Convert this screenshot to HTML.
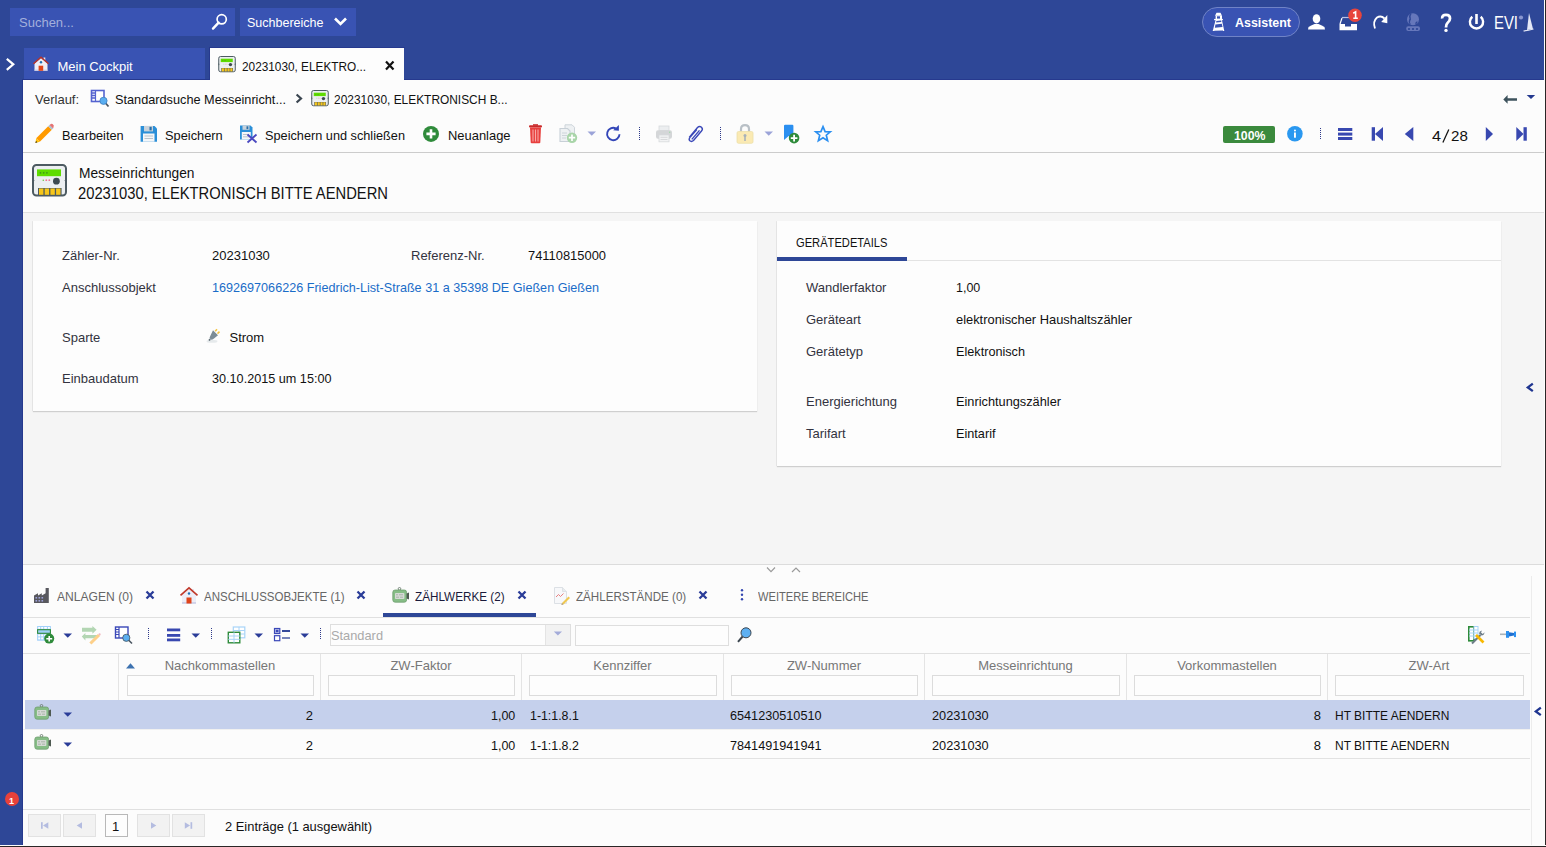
<!DOCTYPE html>
<html><head><meta charset="utf-8">
<style>
*{box-sizing:border-box;margin:0;padding:0}
html,body{width:1546px;height:847px;overflow:hidden;background:#2e4797;font-family:"Liberation Sans",sans-serif;font-size:13px;color:#1a1a1a}
.a{position:absolute}
.t{position:absolute;white-space:nowrap;line-height:0;height:0}
svg{position:absolute;overflow:visible}
</style></head><body>
<div class="a" style="left:1544px;top:0px;width:2px;height:847px;background:#fdfdfd;"></div>
<div class="a" style="left:1545px;top:0px;width:1px;height:847px;background:#2a2626;"></div>
<div class="a" style="left:0px;top:845px;width:1546px;height:2px;background:#fdfdfd;"></div>
<div class="a" style="left:0px;top:846px;width:1546px;height:1px;background:#2a2626;"></div>
<div class="a" style="left:10px;top:8px;width:225px;height:28px;background:#3953b3;"></div>
<div class="t" style="left:19px;top:23.49px;font-size:13px;color:#a3b0dc;">Suchen...</div>
<div class="a" style="left:240px;top:8px;width:116px;height:28px;background:#3953b3;"></div>
<div class="t" style="left:247px;top:23.49px;font-size:13px;color:#ffffff;transform:scaleX(0.9623);transform-origin:left 0;">Suchbereiche</div>
<div class="a" style="left:1202px;top:7px;width:98px;height:30px;background:#3953b3;border-radius:15px;border:1px solid #7083c6"></div>
<div class="t" style="left:1235px;top:23.49px;font-size:13px;color:#ffffff;font-weight:bold;transform:scaleX(0.9570);transform-origin:left 0;">Assistent</div>
<div class="a" style="left:24px;top:48px;width:181px;height:31px;background:#3953b3;"></div>
<div class="a" style="left:22px;top:79px;width:188px;height:1px;background:#26398e;"></div>
<div class="a" style="left:404px;top:79px;width:1140px;height:1px;background:#26398e;"></div>
<div class="a" style="left:22px;top:79px;width:1px;height:766px;background:#26398e;"></div>
<div class="a" style="left:209px;top:47px;width:196px;height:1px;background:#26398e;"></div>
<div class="a" style="left:209px;top:47px;width:1px;height:33px;background:#26398e;"></div>
<div class="t" style="left:57.5px;top:67.49px;font-size:13px;color:#ffffff;">Mein Cockpit</div>
<div class="a" style="left:210px;top:48px;width:194px;height:32px;background:#fdfdfd;"></div>
<div class="t" style="left:242px;top:67.49px;font-size:13px;color:#111111;transform:scaleX(0.9079);transform-origin:left 0;">20231030, ELEKTRO...</div>
<div class="a" style="left:23px;top:80px;width:1521px;height:765px;background:#fcfcfc;"></div>
<div class="t" style="left:35px;top:100.49px;font-size:13px;color:#333333;">Verlauf:</div>
<div class="t" style="left:114.5px;top:100.49px;font-size:13px;color:#111111;transform:scaleX(0.9779);transform-origin:left 0;">Standardsuche Messeinricht...</div>
<div class="t" style="left:334px;top:100.49px;font-size:13px;color:#111111;transform:scaleX(0.9165);transform-origin:left 0;">20231030, ELEKTRONISCH B...</div>
<div class="t" style="left:61.5px;top:136.49px;font-size:13px;color:#111111;transform:scaleX(0.9797);transform-origin:left 0;">Bearbeiten</div>
<div class="t" style="left:165px;top:136.49px;font-size:13px;color:#111111;transform:scaleX(0.9857);transform-origin:left 0;">Speichern</div>
<div class="t" style="left:265px;top:136.49px;font-size:13px;color:#111111;transform:scaleX(0.9784);transform-origin:left 0;">Speichern und schließen</div>
<div class="t" style="left:447.5px;top:136.49px;font-size:13px;color:#111111;transform:scaleX(0.9939);transform-origin:left 0;">Neuanlage</div>
<div class="a" style="left:1223px;top:126px;width:52px;height:17px;background:#3b8a3d;border-radius:2px"></div>
<div class="t" style="left:1233.5px;top:136.49px;font-size:13px;color:#ffffff;font-weight:bold;transform:scaleX(0.9474);transform-origin:left 0;">100%</div>
<div class="t" style="left:1431.8px;top:135.80px;font-size:15px;color:#111111;transform:scaleX(1.0789);transform-origin:left 0;">4</div>
<svg style="left:1440px;top:128px;" width="12" height="16" viewBox="0 0 12 16"><line x1="2.9" y1="14.6" x2="8.8" y2="1.6" stroke="#111" stroke-width="1.25"/></svg>
<div class="t" style="left:1451px;top:135.80px;font-size:15px;color:#111111;transform:scaleX(1.0069);transform-origin:left 0;">28</div>
<div class="a" style="left:23px;top:152px;width:1521px;height:1px;background:#cccccc;"></div>
<div class="t" style="left:78.5px;top:173.15px;font-size:14px;color:#111111;transform:scaleX(0.9829);transform-origin:left 0;">Messeinrichtungen</div>
<div class="t" style="left:78px;top:194.45px;font-size:16px;color:#111111;transform:scaleX(0.9223);transform-origin:left 0;">20231030, ELEKTRONISCH BITTE AENDERN</div>
<div class="a" style="left:23px;top:212px;width:1521px;height:1px;background:#e0e0e0;"></div>
<div class="a" style="left:23px;top:213px;width:1521px;height:351px;background:#f5f5f5;"></div>
<div class="a" style="left:33px;top:221px;width:724px;height:190px;background:#fdfdfd;box-shadow:0 1px 1px #cfcfcf,-1px 0 0 #e8e8e8"></div>
<div class="a" style="left:777px;top:221px;width:724px;height:245px;background:#fdfdfd;box-shadow:0 1px 1px #cfcfcf,-1px 0 0 #e8e8e8"></div>
<div class="t" style="left:62px;top:256.49px;font-size:13px;color:#333340;">Zähler-Nr.</div>
<div class="t" style="left:212px;top:256.49px;font-size:13px;color:#111111;">20231030</div>
<div class="t" style="left:411px;top:256.49px;font-size:13px;color:#333340;">Referenz-Nr.</div>
<div class="t" style="left:528px;top:256.49px;font-size:13px;color:#111111;transform:scaleX(0.9928);transform-origin:left 0;">74110815000</div>
<div class="t" style="left:62px;top:288.49px;font-size:13px;color:#333340;">Anschlussobjekt</div>
<div class="t" style="left:212px;top:288.49px;font-size:13px;color:#1a6cc8;transform:scaleX(0.9702);transform-origin:left 0;">1692697066226 Friedrich-List-Straße 31 a 35398 DE Gießen Gießen</div>
<div class="t" style="left:62px;top:337.99px;font-size:13px;color:#333340;">Sparte</div>
<div class="t" style="left:229.5px;top:337.99px;font-size:13px;color:#111111;">Strom</div>
<div class="t" style="left:62px;top:378.99px;font-size:13px;color:#333340;">Einbaudatum</div>
<div class="t" style="left:212px;top:378.99px;font-size:13px;color:#111111;transform:scaleX(0.9725);transform-origin:left 0;">30.10.2015 um 15:00</div>
<div class="t" style="left:796.2px;top:243.49px;font-size:13px;color:#111111;transform:scaleX(0.8578);transform-origin:left 0;">GERÄTEDETAILS</div>
<div class="a" style="left:777px;top:257px;width:130px;height:4px;background:#2e4797;"></div>
<div class="a" style="left:907px;top:260px;width:594px;height:1px;background:#e3e3e3;"></div>
<div class="t" style="left:806px;top:288.49px;font-size:13px;color:#333340;">Wandlerfaktor</div>
<div class="t" style="left:956px;top:288.49px;font-size:13px;color:#111111;transform:scaleX(0.9604);transform-origin:left 0;">1,00</div>
<div class="t" style="left:806px;top:320.49px;font-size:13px;color:#333340;">Geräteart</div>
<div class="t" style="left:956px;top:320.49px;font-size:13px;color:#111111;transform:scaleX(0.9902);transform-origin:left 0;">elektronischer Haushaltszähler</div>
<div class="t" style="left:806px;top:352.49px;font-size:13px;color:#333340;">Gerätetyp</div>
<div class="t" style="left:956px;top:352.49px;font-size:13px;color:#111111;transform:scaleX(0.9745);transform-origin:left 0;">Elektronisch</div>
<div class="t" style="left:806px;top:402.49px;font-size:13px;color:#333340;">Energierichtung</div>
<div class="t" style="left:956px;top:402.49px;font-size:13px;color:#111111;transform:scaleX(0.9818);transform-origin:left 0;">Einrichtungszähler</div>
<div class="t" style="left:806px;top:434.49px;font-size:13px;color:#333340;">Tarifart</div>
<div class="t" style="left:956px;top:434.49px;font-size:13px;color:#111111;transform:scaleX(0.9763);transform-origin:left 0;">Eintarif</div>
<div class="a" style="left:23px;top:564px;width:1521px;height:1px;background:#dcdcdc;"></div>
<div class="t" style="left:57.4px;top:597.49px;font-size:13px;color:#666666;transform:scaleX(0.9310);transform-origin:left 0;">ANLAGEN (0)</div>
<div class="t" style="left:204.2px;top:597.49px;font-size:13px;color:#666666;transform:scaleX(0.8881);transform-origin:left 0;">ANSCHLUSSOBJEKTE (1)</div>
<div class="t" style="left:415px;top:597.49px;font-size:13px;color:#1a1a3a;transform:scaleX(0.9011);transform-origin:left 0;">ZÄHLWERKE (2)</div>
<div class="t" style="left:576.2px;top:597.49px;font-size:13px;color:#666666;transform:scaleX(0.8922);transform-origin:left 0;">ZÄHLERSTÄNDE (0)</div>
<div class="t" style="left:757.5px;top:597.49px;font-size:13px;color:#666666;transform:scaleX(0.8546);transform-origin:left 0;">WEITERE BEREICHE</div>
<div class="a" style="left:383px;top:613px;width:153px;height:4px;background:#2e4797;"></div>
<div class="a" style="left:23px;top:617px;width:1507px;height:1px;background:#e0e0e0;"></div>
<div class="a" style="left:330px;top:624px;width:241px;height:22px;background:#fdfdfd;border:1px solid #dedede"></div>
<div class="a" style="left:545px;top:625px;width:25px;height:20px;background:#f2f2f2;border-left:1px solid #e4e4e4"></div>
<div class="t" style="left:331.4px;top:636.49px;font-size:13px;color:#aaaaaa;transform:scaleX(0.9856);transform-origin:left 0;">Standard</div>
<div class="a" style="left:575px;top:625px;width:154px;height:21px;background:#fdfdfd;border:1px solid #dedede"></div>
<div class="a" style="left:23px;top:653px;width:1507px;height:1px;background:#e0e0e0;"></div>
<div class="a" style="left:118px;top:654px;width:1px;height:46px;background:#e4e4e4;"></div>
<div class="a" style="left:320px;top:654px;width:1px;height:46px;background:#e4e4e4;"></div>
<div class="a" style="left:521px;top:654px;width:1px;height:46px;background:#e4e4e4;"></div>
<div class="a" style="left:723px;top:654px;width:1px;height:46px;background:#e4e4e4;"></div>
<div class="a" style="left:924px;top:654px;width:1px;height:46px;background:#e4e4e4;"></div>
<div class="a" style="left:1126px;top:654px;width:1px;height:46px;background:#e4e4e4;"></div>
<div class="a" style="left:1327px;top:654px;width:1px;height:46px;background:#e4e4e4;"></div>
<div class="t" style="left:164.72890625px;top:665.99px;font-size:13px;color:#777777;">Nachkommastellen</div>
<div class="a" style="left:127px;top:675px;width:187px;height:21px;background:#fdfdfd;border:1px solid #dcdcdc"></div>
<div class="t" style="left:390.42734375px;top:665.99px;font-size:13px;color:#777777;">ZW-Faktor</div>
<div class="a" style="left:328px;top:675px;width:187px;height:21px;background:#fdfdfd;border:1px solid #dcdcdc"></div>
<div class="t" style="left:593.35234375px;top:665.99px;font-size:13px;color:#777777;">Kennziffer</div>
<div class="a" style="left:529px;top:675px;width:188px;height:21px;background:#fdfdfd;border:1px solid #dcdcdc"></div>
<div class="t" style="left:786.93046875px;top:665.99px;font-size:13px;color:#777777;">ZW-Nummer</div>
<div class="a" style="left:731px;top:675px;width:187px;height:21px;background:#fdfdfd;border:1px solid #dcdcdc"></div>
<div class="t" style="left:978.173046875px;top:665.99px;font-size:13px;color:#777777;">Messeinrichtung</div>
<div class="a" style="left:932px;top:675px;width:188px;height:21px;background:#fdfdfd;border:1px solid #dcdcdc"></div>
<div class="t" style="left:1177.146484375px;top:665.99px;font-size:13px;color:#777777;">Vorkommastellen</div>
<div class="a" style="left:1134px;top:675px;width:187px;height:21px;background:#fdfdfd;border:1px solid #dcdcdc"></div>
<div class="t" style="left:1408.541796875px;top:665.99px;font-size:13px;color:#777777;">ZW-Art</div>
<div class="a" style="left:1335px;top:675px;width:189px;height:21px;background:#fdfdfd;border:1px solid #dcdcdc"></div>
<div class="a" style="left:25px;top:700px;width:1505px;height:29px;background:#c5d0ec;"></div>
<div class="a" style="left:23px;top:729px;width:1507px;height:1px;background:#f0f0f0;"></div>
<div class="a" style="left:23px;top:758px;width:1507px;height:1px;background:#e2e2e2;"></div>
<div class="t" style="left:305.77px;top:716.49px;font-size:13px;color:#111111;">2</div>
<div class="t" style="left:489.70px;top:716.49px;font-size:13px;color:#111111;transform:scaleX(0.9604);transform-origin:right 0;">1,00</div>
<div class="t" style="left:529.5px;top:716.49px;font-size:13px;color:#111111;transform:scaleX(0.9510);transform-origin:left 0;">1-1:1.8.1</div>
<div class="t" style="left:730px;top:716.49px;font-size:13px;color:#111111;transform:scaleX(0.9735);transform-origin:left 0;">6541230510510</div>
<div class="t" style="left:932px;top:716.49px;font-size:13px;color:#111111;transform:scaleX(0.9803);transform-origin:left 0;">20231030</div>
<div class="t" style="left:1313.77px;top:716.49px;font-size:13px;color:#111111;">8</div>
<div class="t" style="left:1335.4px;top:716.49px;font-size:13px;color:#111111;transform:scaleX(0.9218);transform-origin:left 0;">HT BITTE AENDERN</div>
<div class="t" style="left:305.77px;top:746.49px;font-size:13px;color:#111111;">2</div>
<div class="t" style="left:489.70px;top:746.49px;font-size:13px;color:#111111;transform:scaleX(0.9604);transform-origin:right 0;">1,00</div>
<div class="t" style="left:529.5px;top:746.49px;font-size:13px;color:#111111;transform:scaleX(0.9510);transform-origin:left 0;">1-1:1.8.2</div>
<div class="t" style="left:730px;top:746.49px;font-size:13px;color:#111111;transform:scaleX(0.9735);transform-origin:left 0;">7841491941941</div>
<div class="t" style="left:932px;top:746.49px;font-size:13px;color:#111111;transform:scaleX(0.9803);transform-origin:left 0;">20231030</div>
<div class="t" style="left:1313.77px;top:746.49px;font-size:13px;color:#111111;">8</div>
<div class="t" style="left:1335.4px;top:746.49px;font-size:13px;color:#111111;transform:scaleX(0.9218);transform-origin:left 0;">NT BITTE AENDERN</div>
<div class="a" style="left:1531px;top:576px;width:1px;height:269px;background:#ececec;"></div>
<div class="a" style="left:23px;top:809px;width:1507px;height:1px;background:#e0e0e0;"></div>
<div class="a" style="left:28px;top:814px;width:33px;height:23px;background:#f2f2f2;border:1px solid #e2e2e2"></div>
<div class="a" style="left:63px;top:814px;width:33px;height:23px;background:#f2f2f2;border:1px solid #e2e2e2"></div>
<div class="a" style="left:137px;top:814px;width:33px;height:23px;background:#f2f2f2;border:1px solid #e2e2e2"></div>
<div class="a" style="left:172px;top:814px;width:33px;height:23px;background:#f2f2f2;border:1px solid #e2e2e2"></div>
<div class="a" style="left:105px;top:814px;width:23px;height:23px;background:#fdfdfd;border:1px solid #b8b8b8"></div>
<div class="t" style="left:112px;top:827.49px;font-size:13px;color:#111111;">1</div>
<div class="t" style="left:225px;top:827.49px;font-size:13px;color:#111111;transform:scaleX(0.9923);transform-origin:left 0;">2 Einträge (1 ausgewählt)</div>
<div class="a" style="left:5px;top:792px;width:14px;height:14px;background:#e8413a;border-radius:50%"></div>
<div class="t" style="left:9px;top:800.88px;font-size:9px;color:#ffffff;font-weight:bold;">1</div>
<svg style="left:0px;top:50px;" width="24" height="30" viewBox="0 50 24 30"><polyline points="6.8,58.8 13.3,64.3 6.8,69.8" fill="none" stroke="#fff" stroke-width="2.2"/></svg>
<svg style="left:200px;top:6px;" width="40" height="32" viewBox="0 0 40 32"><circle cx="21.7" cy="13.3" r="4.6" fill="none" stroke="#fff" stroke-width="1.7"/><line x1="18.6" y1="16.6" x2="13" y2="22.6" stroke="#fff" stroke-width="2.4" stroke-linecap="round"/></svg>
<svg style="left:330px;top:10px;" width="20" height="20" viewBox="0 0 20 20"><polyline points="5,8.5 10.5,14 16,8.5" fill="none" stroke="#fff" stroke-width="2.6"/></svg>
<svg style="left:1210px;top:10px;" width="18" height="24" viewBox="0 0 18 24"><g fill="#fff"><path d="M6.5,2.8 L10.5,2.8 L12,5.8 L5,5.8 Z"/><rect x="5.6" y="5.7" width="6.4" height="3.6"/><rect x="4.1" y="8.9" width="8.8" height="1.3"/><path d="M5.6,10 L11.9,10 L14.3,21 L2.7,21 Z"/></g><g fill="#3953b3"><rect x="7" y="6.3" width="3" height="2.3"/><path d="M6.4,11 L11.1,10.6 L11.4,12.1 L6.1,12.6 Z"/><path d="M5.4,14.5 L11.8,13.7 L12.5,17 L4.9,17.8 Z"/><path d="M4.4,20.7 L12.9,20.4 L13.2,21.3 L4,21.3 Z"/></g></svg>
<svg style="left:1306px;top:12px;" width="22" height="20" viewBox="0 0 22 20"><ellipse cx="10.5" cy="6.8" rx="3.8" ry="4.6" fill="#fff"/><path d="M2,17.5 L2.5,15 Q6,13 8.5,12 L12.5,12 Q15,13 18.5,15 L19,17.5 Z" fill="#fff"/></svg>
<svg style="left:1336px;top:10px;" width="26" height="24" viewBox="0 0 26 24"><path d="M6,7.5 L17,7.5" stroke="#b8c2e6" stroke-width="1.2"/><path d="M6,8 L4,14" stroke="#fff" stroke-width="1.2"/><path d="M3.5,14 L9,14 L9,16.5 L15,16.5 L15,14 L21,14 L21,20.2 L3.5,20.2 Z" fill="#fff"/><circle cx="19" cy="5.3" r="6.8" fill="#e8453c"/><path d="M17.2,3.2 L19.6,1.8 L19.6,8.2 M17.3,8.2 L21.8,8.2" stroke="#fff" stroke-width="1.6" fill="none"/></svg>
<svg style="left:1370px;top:12px;" width="22" height="20" viewBox="0 0 22 20"><path d="M5,16.5 Q2.5,9.5 7,5.5 Q11,3 14.5,6.5" fill="none" stroke="#fff" stroke-width="1.8"/><path d="M17.3,3 L17.3,11.3 L11.2,10 Z" fill="#fff"/></svg>
<svg style="left:1402px;top:10px;" width="22" height="24" viewBox="0 0 22 24"><circle cx="11" cy="9.3" r="6" fill="#6677bb"/><g fill="#2e4797"><path d="M9.5,4.2 Q8,6 8.8,8 Q9.5,9.5 8.2,11 Q7.5,12.5 9,14.5 L7.5,14 Q6,12 7,10 Q8,8.5 7,7 Q6.8,5 8.5,3.8 Z"/><path d="M13.5,12.5 Q14.5,11 15.8,11.8 Q15,14 13.2,14.8 Z"/></g><rect x="4.2" y="16.3" width="13.8" height="4.8" rx="2" fill="#6677bb"/><g fill="#2e4797"><ellipse cx="7" cy="18.9" rx="1.2" ry="1"/><ellipse cx="11" cy="18.9" rx="1.2" ry="1"/><ellipse cx="15" cy="18.9" rx="1.2" ry="1"/></g></svg>
<svg style="left:1436px;top:11px;" width="20" height="24" viewBox="0 0 20 24"><path d="M6.2,7.5 Q5.8,3.8 10,3.8 Q14,3.8 14,7.5 Q14,10 11.5,12 Q10,13.3 10,16.5" fill="none" stroke="#fff" stroke-width="2.8"/><circle cx="10" cy="19.4" r="1.7" fill="#fff"/></svg>
<svg style="left:1464px;top:10px;" width="24" height="24" viewBox="0 0 24 24"><path d="M8.3,6.8 A6.6,6.6 0 1 0 16.7,6.8" fill="none" stroke="#fff" stroke-width="2.4"/><line x1="12.5" y1="4" x2="12.5" y2="14" stroke="#fff" stroke-width="2.6"/></svg>
<div class="t" style="left:1494px;top:23.41px;font-size:19px;color:#ffffff;transform:scaleX(0.7837);transform-origin:left 0;">EVI</div>
<svg style="left:1516px;top:10px;" width="20" height="24" viewBox="0 0 20 24"><circle cx="5" cy="7.5" r="2.1" fill="#8896cf"/><path d="M13,3 L17,19 L11,20 Z" fill="#e4e8f6"/><path d="M7.5,21 Q12,20.5 17.5,19" stroke="#e4e8f6" stroke-width="1.2" fill="none"/></svg>
<svg style="left:33px;top:56px;" width="16" height="16" viewBox="0 0 16 16"><rect x="10.5" y="1.5" width="1.8" height="3" fill="#e8e8f2"/><path d="M1.5,14.8 L1.5,7.5 L8,2 L14.5,7.5 L14.5,14.8 Z" fill="#eeeef6"/><path d="M1.5,14.8 L14.5,14.8 L14.5,13.6 L1.5,13.6Z" fill="#c9cbe6"/><path d="M0.5,7.8 L8,1.2 L15.5,7.8" fill="none" stroke="#b8332a" stroke-width="1.5"/><rect x="5.6" y="9.7" width="4.6" height="5.1" fill="#e0441a"/><circle cx="8" cy="6.3" r="1.2" fill="#1f6fb5"/></svg>
<svg style="left:32px;top:164px;" width="35" height="32" viewBox="0 0 35 32"><rect x="1" y="1" width="33" height="30.5" rx="3.5" fill="#eceff1" stroke="#4d5b62" stroke-width="2"/><path d="M0.5,14 L2.5,16.5 L0.5,19Z M34.5,14 L32.5,16.5 L34.5,19Z" fill="#4d5b62"/><rect x="5" y="5.4" width="24" height="6.8" fill="#5fdc00"/><circle cx="8.5" cy="8.8" r="0.9" fill="#3f9a1a"/><circle cx="11.7" cy="8.8" r="0.9" fill="#3f9a1a"/><circle cx="14.9" cy="8.8" r="0.9" fill="#3f9a1a"/><circle cx="11.3" cy="16.2" r="0.8" fill="#69c24a"/><circle cx="14.3" cy="16.2" r="0.9" fill="#f07590"/><circle cx="17.3" cy="16.2" r="0.9" fill="#f07590"/><circle cx="24.4" cy="17.2" r="3.4" fill="#3d4a50"/><rect x="6" y="24" width="23.6" height="7" fill="#4d5b62"/><rect x="7" y="24.5" width="4.4" height="6.3" fill="#f7c61a"/><rect x="12.7" y="24.5" width="4.4" height="6.3" fill="#f7c61a"/><rect x="18.4" y="24.5" width="4.4" height="6.3" fill="#f7c61a"/><rect x="24.1" y="24.5" width="4.4" height="6.3" fill="#f7c61a"/></svg>
<svg style="left:218px;top:55.5px;" width="18" height="16" viewBox="0 0 35 32"><rect x="1" y="1" width="33" height="30.5" rx="3.5" fill="#eceff1" stroke="#4d5b62" stroke-width="2"/><path d="M0.5,14 L2.5,16.5 L0.5,19Z M34.5,14 L32.5,16.5 L34.5,19Z" fill="#4d5b62"/><rect x="5" y="5.4" width="24" height="6.8" fill="#5fdc00"/><circle cx="8.5" cy="8.8" r="0.9" fill="#3f9a1a"/><circle cx="11.7" cy="8.8" r="0.9" fill="#3f9a1a"/><circle cx="14.9" cy="8.8" r="0.9" fill="#3f9a1a"/><circle cx="11.3" cy="16.2" r="0.8" fill="#69c24a"/><circle cx="14.3" cy="16.2" r="0.9" fill="#f07590"/><circle cx="17.3" cy="16.2" r="0.9" fill="#f07590"/><circle cx="24.4" cy="17.2" r="3.4" fill="#3d4a50"/><rect x="6" y="24" width="23.6" height="7" fill="#4d5b62"/><rect x="7" y="24.5" width="4.4" height="6.3" fill="#f7c61a"/><rect x="12.7" y="24.5" width="4.4" height="6.3" fill="#f7c61a"/><rect x="18.4" y="24.5" width="4.4" height="6.3" fill="#f7c61a"/><rect x="24.1" y="24.5" width="4.4" height="6.3" fill="#f7c61a"/></svg>
<svg style="left:384px;top:60px;" width="12" height="12" viewBox="0 0 12 12"><path d="M2,1.5 L9.5,9.5 M9.5,1.5 L2,9.5" stroke="#111" stroke-width="2.2"/></svg>
<svg style="left:89px;top:88px;" width="22" height="22" viewBox="0 0 22 22"><rect x="2.5" y="2.5" width="12.5" height="11" fill="#fff" stroke="#5563d0" stroke-width="1.6"/><path d="M3,5 L6.5,5 M3,7.5 L6.5,7.5 M3,10 L6.5,10" stroke="#5563d0" stroke-width="1.4"/><line x1="6.5" y1="2.5" x2="6.5" y2="13.5" stroke="#5563d0" stroke-width="1.2"/><line x1="16.5" y1="15" x2="19.5" y2="18.5" stroke="#4a5560" stroke-width="1.8"/><circle cx="14.5" cy="12.8" r="3.6" fill="#5aaef0" stroke="#3d7ec0" stroke-width="0.8"/></svg>
<svg style="left:292px;top:90px;" width="14" height="16" viewBox="0 0 14 16"><polyline points="4.6,4.5 9,8.5 4.6,12.5" fill="none" stroke="#3a4550" stroke-width="2.2"/></svg>
<svg style="left:311px;top:90px;" width="18" height="16" viewBox="0 0 35 32"><rect x="1" y="1" width="33" height="30.5" rx="3.5" fill="#eceff1" stroke="#4d5b62" stroke-width="2"/><path d="M0.5,14 L2.5,16.5 L0.5,19Z M34.5,14 L32.5,16.5 L34.5,19Z" fill="#4d5b62"/><rect x="5" y="5.4" width="24" height="6.8" fill="#5fdc00"/><circle cx="8.5" cy="8.8" r="0.9" fill="#3f9a1a"/><circle cx="11.7" cy="8.8" r="0.9" fill="#3f9a1a"/><circle cx="14.9" cy="8.8" r="0.9" fill="#3f9a1a"/><circle cx="11.3" cy="16.2" r="0.8" fill="#69c24a"/><circle cx="14.3" cy="16.2" r="0.9" fill="#f07590"/><circle cx="17.3" cy="16.2" r="0.9" fill="#f07590"/><circle cx="24.4" cy="17.2" r="3.4" fill="#3d4a50"/><rect x="6" y="24" width="23.6" height="7" fill="#4d5b62"/><rect x="7" y="24.5" width="4.4" height="6.3" fill="#f7c61a"/><rect x="12.7" y="24.5" width="4.4" height="6.3" fill="#f7c61a"/><rect x="18.4" y="24.5" width="4.4" height="6.3" fill="#f7c61a"/><rect x="24.1" y="24.5" width="4.4" height="6.3" fill="#f7c61a"/></svg>
<svg style="left:1500px;top:92px;" width="40" height="14" viewBox="0 0 40 14"><path d="M3.3,7.4 L7.6,3 L7.6,6.2 L17,6.2 L17,8.8 L7.6,8.8 L7.6,11.8 Z" fill="#3d525c"/><path d="M26.7,3 L35.2,3 L31,7 Z" fill="#24398f"/></svg>
<svg style="left:34px;top:123px;" width="22" height="22" viewBox="0 0 22 22"><path d="M2.2,15.2 L14.2,3.2 L17.8,6.8 L5.8,18.8 Z" fill="#ff9a00"/><path d="M14.2,3.2 L15.5,1.9 L19.1,5.5 L17.8,6.8 Z" fill="#a9c2d2"/><path d="M15.5,1.9 L16.8,0.9 Q18.5,0.6 19.6,2.2 Q19.9,3.8 19.1,5.5 Z" fill="#e57373"/><path d="M2.2,15.2 L5.8,18.8 L1.4,19.9 Z" fill="#ffc107"/><path d="M1.4,19.9 L2,18 L3.3,19.3 Z" fill="#222"/></svg>
<svg style="left:139px;top:124px;" width="20" height="20" viewBox="0 0 20 20"><path d="M1.6,1.9 L15.5,1.9 L18,4.4 L18,17.7 L1.6,17.7 Z" fill="#2b8fd8"/><rect x="5" y="1.9" width="9" height="5.5" fill="#c9d2da"/><rect x="10.5" y="2.8" width="2.2" height="3.6" fill="#2b6fa8"/><rect x="4" y="9.5" width="11.5" height="8.2" fill="#f4f6f8"/><path d="M5.5,12 L14,12 M5.5,14.5 L14,14.5" stroke="#b9c3cc" stroke-width="1"/></svg>
<svg style="left:238px;top:123px;" width="22" height="22" viewBox="0 0 22 22"><path d="M2,2.5 L12.5,2.5 L14.5,4.5 L14.5,16.5 L2,16.5 Z" fill="#2b8fd8"/><rect x="4.5" y="2.5" width="7" height="4.3" fill="#c9d2da"/><rect x="8.5" y="3.3" width="1.8" height="2.8" fill="#2b6fa8"/><rect x="3.8" y="9" width="9" height="7.5" fill="#f4f6f8"/><path d="M5,11.5 L11,11.5 M5,13.8 L11,13.8" stroke="#b9c3cc" stroke-width="1"/><path d="M9.5,11.5 L18.5,19.5 M18.5,11.5 L9.5,19.5" stroke="#4a48c0" stroke-width="1.8"/></svg>
<svg style="left:421px;top:124px;" width="20" height="20" viewBox="0 0 20 20"><circle cx="10" cy="9.9" r="8" fill="#2f8b3b"/><path d="M10,5.3 L10,14.5 M5.4,9.9 L14.6,9.9" stroke="#fff" stroke-width="2.6"/></svg>
<svg style="left:527px;top:123px;" width="18" height="22" viewBox="0 0 18 22"><rect x="2" y="2.2" width="13" height="2.3" rx="1" fill="#c92a2a"/><rect x="6" y="1.2" width="5" height="1.5" fill="#c92a2a"/><path d="M3,4.5 L14,4.5 L13.3,19.5 Q13.2,20.3 12.4,20.3 L4.6,20.3 Q3.8,20.3 3.7,19.5 Z" fill="#e8403e"/><path d="M6,6.5 L6,18.5 M8.5,6.5 L8.5,18.5 M11,6.5 L11,18.5" stroke="#f7a8a6" stroke-width="1.1"/></svg>
<svg style="left:557px;top:123px;" width="24" height="22" viewBox="0 0 24 22"><path d="M8,1.8 L15,1.8 L17.5,4.3 L17.5,13 L8,13 Z" fill="#eef1f3" stroke="#cdd4da" stroke-width="1"/><path d="M3,5.5 L10.5,5.5 L13,8 L13,18.5 L3,18.5 Z" fill="#eef1f3" stroke="#c8d0d7" stroke-width="1.1"/><path d="M5,10 L10,10 M5,12.5 L10,12.5 M5,15 L9,15" stroke="#cdd4da" stroke-width="1"/><circle cx="15" cy="14.7" r="5.2" fill="#a9d5a9"/><path d="M15,11.5 L15,18 M11.8,14.7 L18.2,14.7" stroke="#fff" stroke-width="1.7"/></svg>
<svg style="left:586.5px;top:131px;" width="10" height="6" viewBox="0 0 10 6"><path d="M0.5,0.6 L9,0.6 L4.75,4.8 Z" fill="#9ba3d8"/></svg>
<svg style="left:604px;top:123px;" width="20" height="21" viewBox="0 0 20 21"><path d="M15.5,11.2 A6.2,6.2 0 1 1 11.8,5.3" fill="none" stroke="#3346b8" stroke-width="1.9"/><path d="M9.2,7.2 L14.9,2 L14.9,7.8 Z" fill="#3346b8"/></svg>
<svg style="left:639px;top:127px;" width="1" height="13" viewBox="0 0 1 13"><g fill="#2e3a8a"><rect x="0" y="0" width="1" height="1"/><rect x="0" y="2" width="1" height="1"/><rect x="0" y="4" width="1" height="1"/><rect x="0" y="6" width="1" height="1"/><rect x="0" y="8" width="1" height="1"/><rect x="0" y="10" width="1" height="1"/><rect x="0" y="12" width="1" height="1"/></g></svg>
<svg style="left:654px;top:124px;" width="20" height="20" viewBox="0 0 20 20"><rect x="5" y="2" width="10" height="4.5" fill="#eceef0" stroke="#d7dadd" stroke-width="0.8"/><rect x="2" y="6.3" width="16" height="8.5" rx="2" fill="#d4d6d8"/><rect x="5" y="11" width="10" height="6.8" fill="#f2f3f4" stroke="#d7dadd" stroke-width="0.8"/><path d="M6.5,13.3 L13.5,13.3 M6.5,15.5 L13.5,15.5" stroke="#d4d6d8" stroke-width="0.9"/><circle cx="15.7" cy="8.3" r="0.7" fill="#9fd8a8"/></svg>
<svg style="left:686px;top:124px;" width="19" height="20" viewBox="0 0 19 20"><g fill="none" stroke="#3a48b8" stroke-width="1.4"><path d="M3.2,13.5 L11.5,3.5 Q13.5,1.5 15.5,3.2 Q17.3,5 15.5,7 L7.5,16.5 Q5.5,18.2 3.8,16.8 Q2.4,15.3 4,13.4 L10.8,5.5"/><path d="M5.8,15.4 L13.5,6.4"/></g></svg>
<svg style="left:720px;top:127px;" width="1" height="13" viewBox="0 0 1 13"><g fill="#2e3a8a"><rect x="0" y="0" width="1" height="1"/><rect x="0" y="2" width="1" height="1"/><rect x="0" y="4" width="1" height="1"/><rect x="0" y="6" width="1" height="1"/><rect x="0" y="8" width="1" height="1"/><rect x="0" y="10" width="1" height="1"/><rect x="0" y="12" width="1" height="1"/></g></svg>
<svg style="left:735px;top:123px;" width="20" height="22" viewBox="0 0 20 22"><path d="M6,9.5 L6,6 Q6,2.2 10,2.2 Q14,2.2 14,6 L14,9.5" fill="none" stroke="#b9c0c6" stroke-width="2.2"/><rect x="2" y="8.5" width="16" height="11.8" rx="1.5" fill="#fbeab3" stroke="#ece0a8" stroke-width="0.8"/><circle cx="10" cy="12.5" r="1.5" fill="#a9b2b9"/><rect x="9.2" y="12.5" width="1.6" height="5.5" fill="#a9b2b9"/></svg>
<svg style="left:763.5px;top:131px;" width="10" height="6" viewBox="0 0 10 6"><path d="M0.5,0.6 L9,0.6 L4.75,4.8 Z" fill="#9ba3d8"/></svg>
<svg style="left:781px;top:123px;" width="22" height="22" viewBox="0 0 22 22"><path d="M3,2.8 Q3,1.8 4.2,1.8 L11.2,1.8 Q12.4,1.8 12.4,2.8 L12.4,16.5 L7.7,13 L3,17 Z" fill="#2b8ff0"/><circle cx="13.1" cy="15.1" r="5.3" fill="#2f8b3b"/><path d="M13.1,11.8 L13.1,18.4 M9.8,15.1 L16.4,15.1" stroke="#fff" stroke-width="1.8"/></svg>
<svg style="left:813px;top:124px;" width="20" height="20" viewBox="0 0 20 20"><path d="M10,2.6 L12.1,7.6 L17.3,7.8 L13.3,11.2 L14.6,16.6 L10,13.7 L5.4,16.6 L6.7,11.2 L2.7,7.8 L7.9,7.6 Z" fill="none" stroke="#2b8ff0" stroke-width="1.7" stroke-linejoin="miter"/></svg>
<svg style="left:1285px;top:124px;" width="20" height="20" viewBox="0 0 20 20"><circle cx="9.9" cy="9.8" r="7.8" fill="#2a98f0"/><rect x="9" y="8.5" width="1.9" height="5.2" fill="#fff"/><circle cx="9.95" cy="6.5" r="1" fill="#fff"/></svg>
<svg style="left:1320px;top:128px;" width="1" height="12" viewBox="0 0 1 12"><g fill="#2e3a8a"><rect x="0" y="0" width="1" height="1"/><rect x="0" y="2" width="1" height="1"/><rect x="0" y="4" width="1" height="1"/><rect x="0" y="6" width="1" height="1"/><rect x="0" y="8" width="1" height="1"/><rect x="0" y="10" width="1" height="1"/></g></svg>
<svg style="left:1336px;top:126px;" width="18" height="16" viewBox="0 0 18 16"><rect x="2" y="2" width="14.3" height="3" fill="#3848b0"/><rect x="2" y="6.6" width="14.3" height="3" fill="#3848b0"/><rect x="2" y="11" width="14.3" height="3" fill="#3848b0"/></svg>
<svg style="left:1370px;top:125px;" width="16" height="18" viewBox="0 0 16 18"><rect x="1.7" y="2.2" width="3.3" height="13.5" fill="#3848b0"/><path d="M13,2 L13,16 L5,9 Z" fill="#3848b0"/></svg>
<svg style="left:1403px;top:125px;" width="12" height="18" viewBox="0 0 12 18"><path d="M10.3,2 L10.3,16 L1.8,9 Z" fill="#3848b0"/></svg>
<svg style="left:1484px;top:125px;" width="12" height="18" viewBox="0 0 12 18"><path d="M1.8,2 L1.8,16 L9,9 Z" fill="#3848b0"/></svg>
<svg style="left:1514px;top:125px;" width="16" height="18" viewBox="0 0 16 18"><path d="M2.3,2 L2.3,16 L9.5,9 Z" fill="#3848b0"/><rect x="9.5" y="2.2" width="3.3" height="13.5" fill="#3848b0"/></svg>
<svg style="left:206px;top:328px;" width="16" height="16" viewBox="0 0 16 16"><ellipse cx="6" cy="13.3" rx="5.5" ry="1.5" fill="#e6eaec"/><path d="M7,2.2 L12,7.2 L8,10.5 Q6,12.5 4.3,11 Q2.8,9.5 4.5,7.5 Z" fill="#7d8d96"/><path d="M4.2,11.2 L3,12.5" stroke="#5f6e76" stroke-width="1.8"/><path d="M9.2,3.2 L11,1.2 M11.5,5.6 L13.5,3.7" stroke="#f5c542" stroke-width="1.6"/></svg>
<svg style="left:1526px;top:382.5px;" width="8" height="10" viewBox="0 0 8 10"><polyline points="5.9,1.3 1.8,4.4 5.9,7.5" fill="none" stroke="#1f3590" stroke-width="2.3" stroke-linecap="square"/></svg>
<svg style="left:1533.5px;top:706.5px;" width="8" height="10" viewBox="0 0 8 10"><polyline points="5.9,1.3 1.8,4.4 5.9,7.5" fill="none" stroke="#1f3590" stroke-width="2.3" stroke-linecap="square"/></svg>
<svg style="left:764px;top:566px;" width="14" height="8" viewBox="0 0 14 8"><polyline points="3,1.5 7,5.6 11,1.5" fill="none" stroke="#9a9a9a" stroke-width="1.2"/></svg>
<svg style="left:789px;top:566px;" width="14" height="8" viewBox="0 0 14 8"><polyline points="3,6 7,2 11,6" fill="none" stroke="#9a9a9a" stroke-width="1.2"/></svg>
<svg style="left:32px;top:586px;" width="18" height="19" viewBox="0 0 18 19"><path d="M2,17 L2,9.5 L6,7.2 L6,9.5 L9.8,7.2 L9.8,9.5 L13.6,7.2 L13.6,2 L16.8,2 L16.8,17 Z" fill="#58585e"/><g fill="#9ba0d8"><rect x="3.5" y="11" width="1.6" height="1.6"/><rect x="6.5" y="11" width="1.6" height="1.6"/><rect x="9.5" y="11" width="1.6" height="1.6"/><rect x="3.5" y="14" width="1.6" height="1.6"/><rect x="6.5" y="14" width="1.6" height="1.6"/><rect x="9.5" y="14" width="1.6" height="1.6"/></g></svg>
<svg style="left:179px;top:586px;" width="20" height="19" viewBox="0 0 20 19"><rect x="13" y="3" width="2" height="3.5" fill="#e6e6f0"/><path d="M3,17.5 L3,9 L10,3 L17,9 L17,17.5 Z" fill="#ededf6"/><rect x="3" y="16.2" width="14" height="1.5" fill="#c9cbe6"/><path d="M1.5,9.3 L10,1.8 L18.5,9.3" fill="none" stroke="#c0392b" stroke-width="1.7"/><rect x="7.5" y="11.5" width="5" height="6" fill="#e0441a"/><circle cx="10" cy="7.5" r="1.2" fill="#1f6fb5"/></svg>
<svg style="left:391.5px;top:586.5px;" width="18" height="16" viewBox="0 0 18 16"><circle cx="7.5" cy="1.8" r="1.3" fill="none" stroke="#6c7a70" stroke-width="0.9"/><rect x="0.8" y="3" width="13.8" height="12.2" rx="2.3" fill="#86bd86" stroke="#6e9e70" stroke-width="0.8"/><rect x="3" y="6" width="9.4" height="6" rx="0.8" fill="#d5dad5"/><path d="M4,7.8 L6,7.8 M7,7.8 L11,7.8 M4,10.2 L7,10.2 M8,10.2 L11,10.2" stroke="#aab4aa" stroke-width="1"/><path d="M14.6,6.5 L17,5.5 L17,12.5 L14.6,11.5 Z" fill="#4f5a52"/></svg>
<svg style="left:552px;top:586px;" width="20" height="19" viewBox="0 0 20 19"><path d="M2.5,1.5 L10.5,1.5 L14.5,5.5 L14.5,17.5 L2.5,17.5 Z" fill="#f7f8fa" stroke="#d8dde2" stroke-width="0.9"/><path d="M10.5,1.5 L10.5,5.5 L14.5,5.5" fill="#e8ebee" stroke="#d8dde2" stroke-width="0.8"/><polyline points="4,11 6.5,8.5 8.5,10.5 11.5,7.5" fill="none" stroke="#e88080" stroke-width="1"/><path d="M10,17 L16.5,10.5 L18,12 L11.5,18.5 Z" fill="#f0c850"/><path d="M10,17 L11.5,18.5 L9.3,19 Z" fill="#aa9060"/></svg>
<svg style="left:144.5px;top:590px;" width="10" height="10" viewBox="0 0 10 10"><path d="M1.5,1.5 L8.5,8.5 M8.5,1.5 L1.5,8.5" stroke="#2a3c98" stroke-width="2.3"/></svg>
<svg style="left:356px;top:590px;" width="10" height="10" viewBox="0 0 10 10"><path d="M1.5,1.5 L8.5,8.5 M8.5,1.5 L1.5,8.5" stroke="#2a3c98" stroke-width="2.3"/></svg>
<svg style="left:516.5px;top:590px;" width="10" height="10" viewBox="0 0 10 10"><path d="M1.5,1.5 L8.5,8.5 M8.5,1.5 L1.5,8.5" stroke="#2a3c98" stroke-width="2.3"/></svg>
<svg style="left:697.5px;top:590px;" width="10" height="10" viewBox="0 0 10 10"><path d="M1.5,1.5 L8.5,8.5 M8.5,1.5 L1.5,8.5" stroke="#2a3c98" stroke-width="2.3"/></svg>
<svg style="left:738px;top:588px;" width="8" height="14" viewBox="0 0 8 14"><circle cx="4" cy="2.3" r="1.2" fill="#3346b0"/><circle cx="4" cy="6.8" r="1.2" fill="#3346b0"/><circle cx="4" cy="11.3" r="1.2" fill="#3346b0"/></svg>
<svg style="left:35px;top:624px;" width="22" height="22" viewBox="0 0 22 22"><rect x="2.1" y="2" width="13.8" height="14.7" fill="#a3d1fa"/><g fill="#fff"><rect x="3.2" y="3" width="2" height="1.8"/><rect x="6.2" y="3" width="2" height="1.8"/><rect x="9.2" y="3" width="2.7" height="1.8"/><rect x="12.9" y="3" width="2" height="1.8"/><rect x="3.2" y="10.4" width="2" height="2"/><rect x="6.2" y="10.4" width="2" height="2"/><rect x="9.2" y="10.4" width="2.7" height="2"/><rect x="3.2" y="13.4" width="2" height="2"/><rect x="6.2" y="13.4" width="2" height="2"/></g><rect x="2.6" y="5.7" width="12.8" height="3.6" fill="#9fd0fb" stroke="#2e8b3b" stroke-width="1.1"/><circle cx="14.2" cy="14.6" r="5" fill="#2f8b3b"/><path d="M14.2,11.9 L14.2,17.6 M11.3,14.7 L17.2,14.7" stroke="#fff" stroke-width="1.6"/></svg>
<svg style="left:63px;top:632.5px;" width="10" height="6" viewBox="0 0 10 6"><path d="M0.5,0.6 L9,0.6 L4.75,4.8 Z" fill="#2a3c98"/></svg>
<svg style="left:80px;top:624px;" width="22" height="22" viewBox="0 0 22 22"><path d="M2,3.8 L12.4,3.8 L12.4,2 L16.6,5.8 L12.4,9.7 L12.4,7.8 L2,7.8 Z" fill="#b3d6b3"/><path d="M17,10.9 L5.4,10.9 L5.4,9 L1.8,12.6 L5.4,16.4 L5.4,14.2 L17,14.2 Z" fill="#b3d6b3"/><path d="M9.3,18.4 L17.9,9.9 L20.1,12.1 L11.5,20.6 Z" fill="#fdd08a"/><circle cx="19.6" cy="10.4" r="1.1" fill="#f0b8c0"/></svg>
<svg style="left:113px;top:624px;" width="22" height="22" viewBox="0 0 22 22"><rect x="2.5" y="3" width="12.5" height="11" fill="#fff" stroke="#3a48b8" stroke-width="1.4"/><path d="M2.5,5.5 L6,5.5 M2.5,8 L6,8 M2.5,10.5 L6,10.5" stroke="#3a48b8" stroke-width="1.2"/><line x1="6" y1="3" x2="6" y2="14" stroke="#3a48b8" stroke-width="1.2"/><line x1="15.5" y1="16" x2="19" y2="19.5" stroke="#4a5560" stroke-width="1.6"/><circle cx="13.3" cy="13.8" r="3.6" fill="#5aaef0" stroke="#444f58" stroke-width="0.8"/></svg>
<svg style="left:148px;top:628px;" width="1" height="12" viewBox="0 0 1 12"><g fill="#2e3a8a"><rect x="0" y="0" width="1" height="1"/><rect x="0" y="2" width="1" height="1"/><rect x="0" y="4" width="1" height="1"/><rect x="0" y="6" width="1" height="1"/><rect x="0" y="8" width="1" height="1"/><rect x="0" y="10" width="1" height="1"/></g></svg>
<svg style="left:165px;top:626px;" width="16" height="16" viewBox="0 0 16 16"><rect x="2" y="2.5" width="13.2" height="2.8" fill="#3848b0"/><rect x="2" y="8" width="13.2" height="2.8" fill="#3848b0"/><rect x="2" y="12.5" width="13.2" height="2.8" fill="#3848b0"/></svg>
<svg style="left:191px;top:632.5px;" width="10" height="6" viewBox="0 0 10 6"><path d="M0.5,0.6 L9,0.6 L4.75,4.8 Z" fill="#2a3c98"/></svg>
<svg style="left:211px;top:628px;" width="1" height="12" viewBox="0 0 1 12"><g fill="#2e3a8a"><rect x="0" y="0" width="1" height="1"/><rect x="0" y="2" width="1" height="1"/><rect x="0" y="4" width="1" height="1"/><rect x="0" y="6" width="1" height="1"/><rect x="0" y="8" width="1" height="1"/><rect x="0" y="10" width="1" height="1"/></g></svg>
<svg style="left:226px;top:625px;" width="22" height="20" viewBox="0 0 22 20"><rect x="7.3" y="2" width="11.5" height="10.8" fill="#fff" stroke="#a8d4f8" stroke-width="1.2"/><path d="M7.3,5.5 L18.8,5.5 M7.3,9 L18.8,9 M13,2 L13,12.8" stroke="#a8d4f8" stroke-width="1"/><rect x="2.3" y="7.3" width="11.5" height="10.5" fill="#fff" stroke="#2e8b3b" stroke-width="1.4"/><path d="M2.3,11 L13.8,11 M2.3,14.3 L13.8,14.3 M8,7.3 L8,17.8" stroke="#a8d4f8" stroke-width="1"/></svg>
<svg style="left:254.2px;top:632.5px;" width="10" height="6" viewBox="0 0 10 6"><path d="M0.5,0.6 L9,0.6 L4.75,4.8 Z" fill="#2a3c98"/></svg>
<svg style="left:272px;top:626px;" width="20" height="17" viewBox="0 0 20 17"><rect x="2.5" y="2.5" width="5.3" height="5" fill="#c9ceee" stroke="#3a48b8" stroke-width="1.2"/><rect x="3.8" y="3.8" width="2.7" height="2.4" fill="#3a48b8"/><rect x="2.5" y="9.7" width="5.3" height="5" fill="#fff" stroke="#3a48b8" stroke-width="1.2"/><path d="M10,5 L18,5" stroke="#1f3590" stroke-width="1.8"/><path d="M10,12 L18,12" stroke="#1f3590" stroke-width="1.2"/></svg>
<svg style="left:300.2px;top:632.5px;" width="10" height="6" viewBox="0 0 10 6"><path d="M0.5,0.6 L9,0.6 L4.75,4.8 Z" fill="#2a3c98"/></svg>
<svg style="left:320px;top:628px;" width="1" height="12" viewBox="0 0 1 12"><g fill="#2e3a8a"><rect x="0" y="0" width="1" height="1"/><rect x="0" y="2" width="1" height="1"/><rect x="0" y="4" width="1" height="1"/><rect x="0" y="6" width="1" height="1"/><rect x="0" y="8" width="1" height="1"/><rect x="0" y="10" width="1" height="1"/></g></svg>
<svg style="left:553px;top:631px;" width="10" height="6" viewBox="0 0 10 6"><path d="M0.8,0.6 L9,0.6 L4.9,4.6 Z" fill="#a3abd9"/></svg>
<svg style="left:734px;top:625px;" width="20" height="20" viewBox="0 0 20 20"><circle cx="12" cy="7.8" r="5" fill="#5eb0f2" stroke="#3c4650" stroke-width="1"/><path d="M8.6,11.5 L4,16.8" stroke="#3c4650" stroke-width="2"/></svg>
<svg style="left:1466px;top:624px;" width="20" height="22" viewBox="0 0 20 22"><rect x="2.8" y="2.8" width="5.2" height="14" fill="#fff" stroke="#2e8b3b" stroke-width="1.6"/><rect x="8" y="2.5" width="4" height="12" fill="#fff" stroke="#a8d4f8" stroke-width="1"/><path d="M3,6 L12,6 M3,9 L12,9 M3,12 L12,12" stroke="#a8d4f8" stroke-width="1"/><path d="M6,19.5 L14.5,11" stroke="#6d7d88" stroke-width="2"/><path d="M13,9.5 Q13.2,7 16,6.5 L15,8.5 L16.8,10 L18.5,8.3 Q18.2,11.5 15.5,11.5" fill="#6d7d88"/><path d="M10,11 L17.5,18.5" stroke="#f8b800" stroke-width="2.6"/></svg>
<svg style="left:1498px;top:628px;" width="20" height="12" viewBox="0 0 20 12"><path d="M2,6.3 L8,6.3" stroke="#a9b3ba" stroke-width="1.6"/><rect x="8" y="3" width="3" height="6.8" fill="#2b90f0"/><path d="M11,4.3 L16,5 L16,7.6 L11,8.4 Z" fill="#2070d0"/><rect x="16" y="3.6" width="2" height="5.5" fill="#2b90f0"/></svg>
<svg style="left:124px;top:661px;" width="14" height="10" viewBox="0 0 14 10"><path d="M2,7.6 L6.5,2.3 L11,7.6 Z" fill="#3d72b0"/></svg>
<svg style="left:34px;top:704px;" width="18" height="16" viewBox="0 0 18 16"><circle cx="7.5" cy="1.8" r="1.3" fill="none" stroke="#6c7a70" stroke-width="0.9"/><rect x="0.8" y="3" width="13.8" height="12.2" rx="2.3" fill="#86bd86" stroke="#6e9e70" stroke-width="0.8"/><rect x="3" y="6" width="9.4" height="6" rx="0.8" fill="#d5dad5"/><path d="M4,7.8 L6,7.8 M7,7.8 L11,7.8 M4,10.2 L7,10.2 M8,10.2 L11,10.2" stroke="#aab4aa" stroke-width="1"/><path d="M14.6,6.5 L17,5.5 L17,12.5 L14.6,11.5 Z" fill="#4f5a52"/></svg>
<svg style="left:62.5px;top:711.5px;" width="10" height="6" viewBox="0 0 10 6"><path d="M0.5,0.6 L9,0.6 L4.75,4.8 Z" fill="#2a3c98"/></svg>
<svg style="left:34px;top:734px;" width="18" height="16" viewBox="0 0 18 16"><circle cx="7.5" cy="1.8" r="1.3" fill="none" stroke="#6c7a70" stroke-width="0.9"/><rect x="0.8" y="3" width="13.8" height="12.2" rx="2.3" fill="#86bd86" stroke="#6e9e70" stroke-width="0.8"/><rect x="3" y="6" width="9.4" height="6" rx="0.8" fill="#d5dad5"/><path d="M4,7.8 L6,7.8 M7,7.8 L11,7.8 M4,10.2 L7,10.2 M8,10.2 L11,10.2" stroke="#aab4aa" stroke-width="1"/><path d="M14.6,6.5 L17,5.5 L17,12.5 L14.6,11.5 Z" fill="#4f5a52"/></svg>
<svg style="left:62.5px;top:741.5px;" width="10" height="6" viewBox="0 0 10 6"><path d="M0.5,0.6 L9,0.6 L4.75,4.8 Z" fill="#2a3c98"/></svg>
<svg style="left:28px;top:814px;" width="33" height="23" viewBox="0 0 33 23"><rect x="13" y="8.2" width="1.7" height="6.6" fill="#b4bce0"/><path d="M20.3,8.2 L20.3,14.8 L15,11.5 Z" fill="#b4bce0"/></svg>
<svg style="left:63px;top:814px;" width="33" height="23" viewBox="0 0 33 23"><path d="M19,8.2 L19,14.8 L13.7,11.5 Z" fill="#b4bce0"/></svg>
<svg style="left:137px;top:814px;" width="33" height="23" viewBox="0 0 33 23"><path d="M14,8.2 L14,14.8 L19.3,11.5 Z" fill="#b4bce0"/></svg>
<svg style="left:172px;top:814px;" width="33" height="23" viewBox="0 0 33 23"><path d="M12.8,8.2 L12.8,14.8 L18.1,11.5 Z" fill="#b4bce0"/><rect x="18.5" y="8.2" width="1.7" height="6.6" fill="#b4bce0"/></svg>
</body></html>
